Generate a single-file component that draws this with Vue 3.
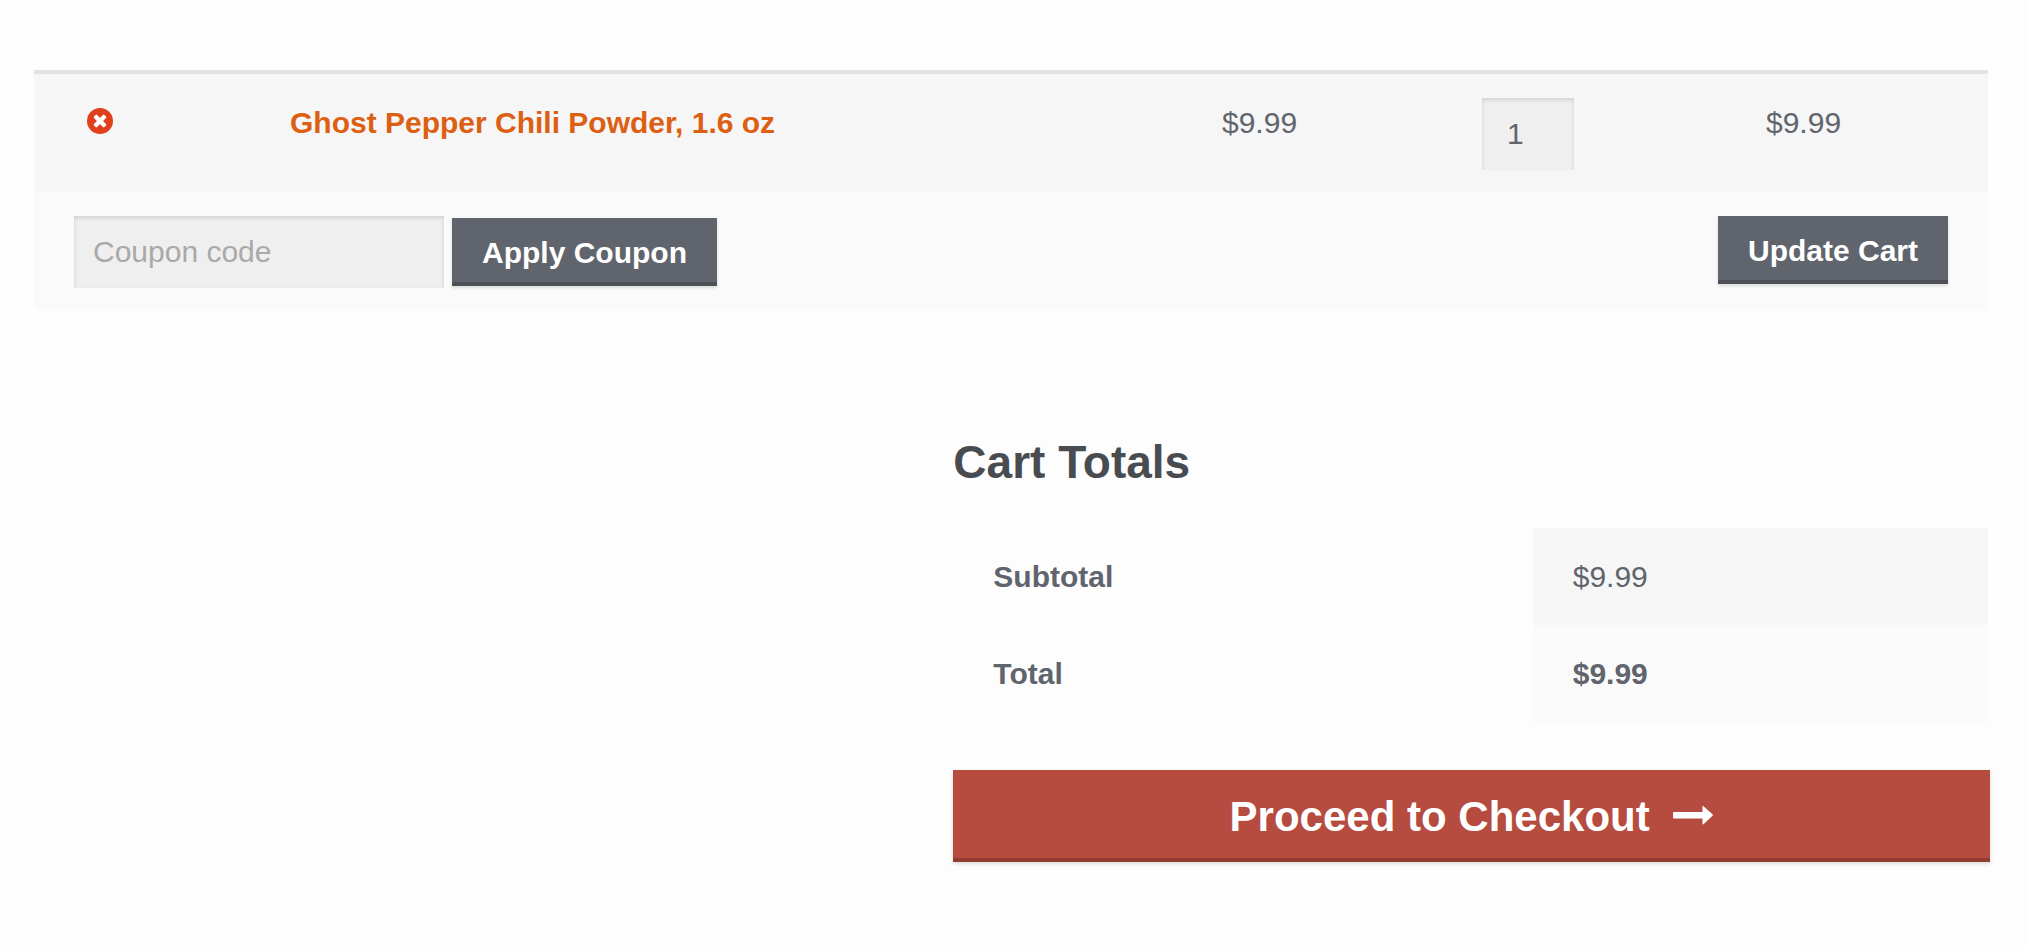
<script setup>
import { ref } from 'vue'

const items = ref([
  { id: 1, name: 'Ghost Pepper Chili Powder, 1.6 oz', price: '$9.99', quantity: '1', total: '$9.99' },
])
const coupon = ref('')
</script>

<template>
  <main class="page">
    <form class="cart-form" @submit.prevent>
      <table class="cart">
        <colgroup>
          <col class="col-remove" />
          <col class="col-thumb" />
          <col />
          <col class="col-price" />
          <col class="col-quantity" />
          <col class="col-total" />
        </colgroup>
        <tbody>
          <tr v-for="item in items" :key="item.id" class="item">
            <td>
              <a class="remove" href="#" aria-label="Remove this item">
                <svg width="26" height="26" viewBox="0 0 26 26" aria-hidden="true">
                  <circle cx="13" cy="13" r="13" fill="#e2401c" />
                  <g fill="#fff" transform="rotate(45 13 13)">
                    <rect x="5.6" y="10.8" width="14.8" height="4.4" rx="1.1" />
                    <rect x="10.8" y="5.6" width="4.4" height="14.8" rx="1.1" />
                  </g>
                </svg>
              </a>
            </td>
            <td></td>
            <td><a class="name" href="#">{{ item.name }}</a></td>
            <td>{{ item.price }}</td>
            <td>
              <input v-model="item.quantity" class="field quantity" type="text" inputmode="numeric" aria-label="Quantity" />
            </td>
            <td>{{ item.total }}</td>
          </tr>
          <tr class="actions">
            <td colspan="6">
              <div class="actions-bar">
                <div class="coupon">
                  <input v-model="coupon" class="field code" type="text" placeholder="Coupon code" aria-label="Coupon code" />
                  <button class="button" type="submit">Apply Coupon</button>
                </div>
                <button class="button" type="submit">Update Cart</button>
              </div>
            </td>
          </tr>
        </tbody>
      </table>
    </form>

    <section class="totals">
      <h2>Cart Totals</h2>
      <table class="sums">
        <tbody>
          <tr>
            <th scope="row">Subtotal</th>
            <td>$9.99</td>
          </tr>
          <tr class="grand">
            <th scope="row">Total</th>
            <td><strong>$9.99</strong></td>
          </tr>
        </tbody>
      </table>
      <a class="checkout" href="#">
        <span>Proceed to Checkout</span>
        <svg width="42" height="20" viewBox="0 0 42 20" aria-hidden="true">
          <path
            d="M2 6H30.500V.800Q30.500 -.500 31.500 .300L40.500 8.200Q41.300 9 40.500 9.800L31.500 18.300Q30.500 19 30.500 17.800V12.500H2Q1 12.500 1 11.500V7Q1 6 2 6Z"
            fill="#fff"
          />
        </svg>
      </a>
    </section>
  </main>
</template>

<style>
body {
  margin: 0;
  background: #fdfdfd;
}
</style>

<style scoped>
.page {
  box-sizing: border-box;
  padding: 70px 36px 84px 34px;
  color: #60646c;
  font: 30px/49px "Liberation Sans", Arial, sans-serif;
}

a {
  text-decoration: none;
}

table {
  width: 100%;
  table-layout: fixed;
  border-collapse: separate;
  border-spacing: 0;
}

th,
td {
  padding: 24px 40px;
  text-align: left;
  vertical-align: top;
}

.cart-form {
  margin-right: 2px;
  border-top: 4px solid #e2e2e2;
}

.cart td {
  padding-bottom: 22px;
}

.item td {
  background: #f6f6f6;
}

.actions td {
  background: #fafafa;
}

.col-remove {
  width: 132px;
}

.col-thumb {
  width: 84px;
}

.col-price {
  width: 260px;
}

.col-quantity {
  width: 284px;
}

.col-total {
  width: 262px;
}

.remove {
  display: flex;
  align-items: center;
  justify-content: center;
  height: 46px;
}

.name {
  color: #dd5f13;
  font-weight: 700;
}

.field {
  display: block;
  box-sizing: border-box;
  height: 72px;
  margin: 0;
  border: 0;
  border-radius: 0;
  outline: 0;
  background: #efefef;
  box-shadow: inset 0 2px 4px rgba(0, 0, 0, 0.13);
  color: #60646c;
  font: inherit;
}

.field::placeholder {
  color: #a9a9a9;
  opacity: 1;
}

.quantity {
  width: 92px;
  padding: 0 25px;
}

.code {
  width: 370px;
  padding: 0 19px;
}

.actions-bar {
  display: flex;
  align-items: flex-start;
  justify-content: space-between;
}

.coupon {
  display: flex;
  align-items: center;
  gap: 8px;
}

.button {
  height: 68px;
  margin: 0;
  padding: 0 30px;
  border: 0;
  border-radius: 0;
  background: #60646c;
  box-shadow: inset 0 -4px 0 #4d5057, 0 2px 3px rgba(0, 0, 0, 0.12);
  color: #fff;
  font: inherit;
  font-weight: 700;
  white-space: nowrap;
}

.totals {
  width: 53%;
  margin: 122px 0 0 auto;
}

h2 {
  margin: 0 0 36px;
  color: #484c51;
  font-size: 46px;
  line-height: 60px;
}

.sums {
  width: calc(100% - 2px);
}

.sums th {
  width: 56%;
  box-sizing: border-box;
}

.sums td {
  background: #f6f6f6;
}

.sums .grand td {
  background: #fafafa;
}

.checkout {
  display: flex;
  align-items: center;
  justify-content: center;
  gap: 22px;
  height: 92px;
  margin-top: 48px;
  background: #b64c3f;
  box-shadow: inset 0 -4px 0 #923d32, 0 2px 4px rgba(0, 0, 0, 0.14);
  color: #fff;
  font-size: 42px;
  font-weight: 700;
}
</style>
